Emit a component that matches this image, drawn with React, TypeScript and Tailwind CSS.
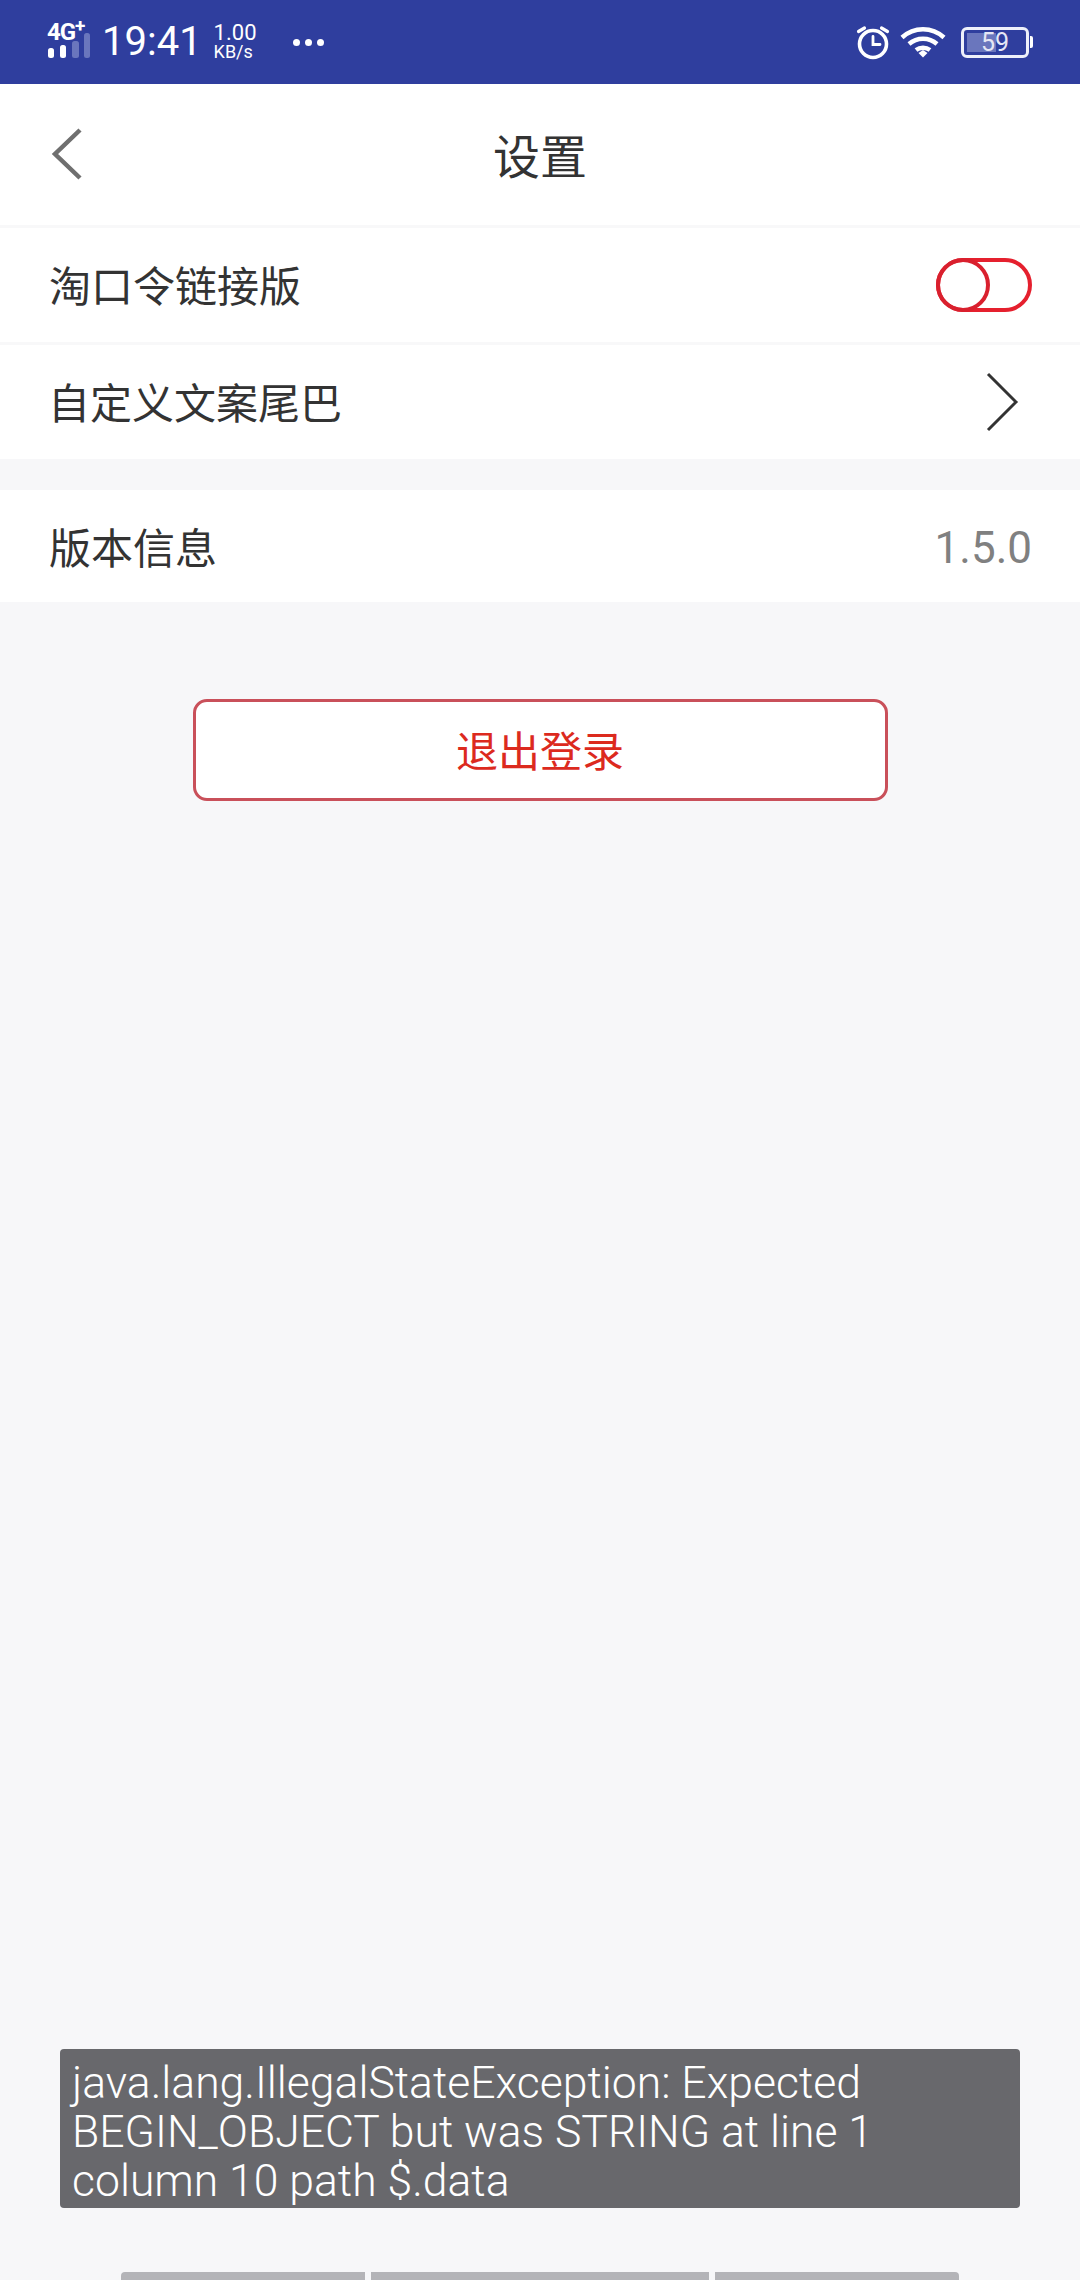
export default function App() {
  const cjk = { fontFamily: '"Noto Sans CJK SC", "Liberation Sans", sans-serif' };
  return (
    <div className="relative flex h-[2280px] w-[1080px] flex-col overflow-hidden bg-[#f7f7f9]" style={cjk}>
      <div className="flex h-[84px] shrink-0 items-center bg-[#2f3e9e] text-white font-['Roboto','Liberation_Sans',sans-serif]">
        <div className="relative ml-[47px] h-[40px] w-[44px]">
          <span className="absolute left-0 top-[-3px] text-[24px] font-bold leading-[26px] tracking-[-1px]">4G</span>
          <span className="absolute left-[28px] top-[-5px] text-[19px] font-bold leading-[18px]">+</span>
          <svg width="44" height="40" viewBox="0 0 44 40" className="absolute left-0 top-0">
            <rect x="1" y="26" width="6" height="10" rx="2.500" fill="#ffffff" />
            <rect x="13" y="23" width="6" height="13" rx="2.500" fill="#ffffff" />
            <rect x="25" y="19" width="7" height="17" rx="2.500" fill="#6a76bd" />
            <rect x="37" y="11" width="6" height="25" rx="2.500" fill="#6a76bd" />
          </svg>
        </div>
        <span className="ml-[11px] text-[40px] leading-none">19:41</span>
        <div className="ml-[12px] flex w-[46px] flex-col items-start text-[18px] leading-[18px]">
          <span className="text-[22px] leading-[20px]">1.00</span>
          <span>KB/s</span>
        </div>
        <div className="ml-[33px] flex gap-[5px]">
          <div className="h-[7px] w-[7px] rounded-full bg-white" />
          <div className="h-[7px] w-[7px] rounded-full bg-white" />
          <div className="h-[7px] w-[7px] rounded-full bg-white" />
        </div>
        <div className="ml-auto mr-[47px] flex items-center">
          <svg width="36" height="36" viewBox="0 0 36 36" fill="none" stroke="#fff" strokeLinecap="round">
            <circle cx="18" cy="20" r="13.5" strokeWidth="3.6" />
            <path d="M18 12.5v8h7" strokeWidth="2.8" />
            <path d="M3.5 7.5l6-3.5M32.5 7.5l-6-3.5" strokeWidth="3.2" />
          </svg>
          <svg width="46" height="34" viewBox="0 0 46 34" fill="none" stroke="#fff" strokeWidth="4.5" className="ml-[9px]">
            <path d="M2 12.5c12-11 30-11 42 0" />
            <path d="M9 19c8-7 20-7 28 0" />
            <path d="M16 25c4-3 10-3 14 0" />
            <path d="M18.5 28l4.5-3 4.500 3-4.500 4.500z" fill="#fff" stroke="none" />
          </svg>
          <div className="relative ml-[15px] flex h-[31px] w-[68px] items-center justify-center rounded-[6px] border-[3px] border-[#eef0fa]">
            <div className="absolute bottom-[3px] left-[3px] top-[3px] w-[29px] bg-[#6a76bd]" />
            <span className="relative text-[25px] leading-none text-[#e4e6f4]">59</span>
          </div>
          <div className="ml-[1px] h-[12px] w-[3px] rounded-r-[2px] bg-white" />
        </div>
      </div>

      <div className="relative flex h-[144px] shrink-0 items-center justify-center border-b-[3px] border-[#f8f8f9] bg-white pb-[3px]">
        <svg width="36" height="56" viewBox="0 0 36 56" fill="none" stroke="#6f6f6f" strokeWidth="4.500" className="absolute left-[50px] top-[42px]">
          <path d="M30 4L5 28l25 24" />
        </svg>
        <span className="text-[47px] leading-none text-[#333333]">设置</span>
      </div>

      <div className="flex h-[117px] shrink-0 items-center justify-between border-b-[3px] border-[#f8f8f9] bg-white pl-[49px] pr-[48px]">
        <span className="pb-[2px] text-[42px] leading-none text-[#333333]">淘口令链接版</span>
        <div className="relative h-[54px] w-[96px] rounded-full border-[4px] border-[#e5202e]">
          <div className="absolute left-[-4px] top-[-4px] h-[54px] w-[54px] rounded-full border-[4px] border-[#d9202e]" />
        </div>
      </div>

      <div className="flex h-[114px] shrink-0 items-center justify-between bg-white pl-[48px] pr-[61px]">
        <span className="pb-[2px] text-[42px] leading-none text-[#333333]">自定义文案尾巴</span>
        <svg width="34" height="60" viewBox="0 0 34 60" fill="none" stroke="#333333" strokeWidth="3">
          <path d="M3 2l28 28-28 28" />
        </svg>
      </div>

      <div className="mt-[31px] flex h-[112px] shrink-0 items-center justify-between bg-white pl-[49px] pr-[48px]">
        <span className="text-[42px] leading-none text-[#333333]">版本信息</span>
        <span className="pt-[3px] font-['Roboto','Liberation_Sans',sans-serif] text-[44px] leading-none text-[#808080]">1.5.0</span>
      </div>

      <button className="mx-auto mt-[97px] flex h-[102px] w-[695px] shrink-0 items-center justify-center rounded-[14px] border-[3px] border-[#c9505a] bg-white pb-[3px] text-[42px] leading-none text-[#dc2a1e]">
        退出登录
      </button>

      <div className="absolute left-[60px] top-[2049px] h-[159px] w-[960px] rounded-[4px] bg-[#68686c] px-[12px] pt-[10px] font-['Roboto','Liberation_Sans',sans-serif] text-[44.5px] font-light leading-[49px] text-white">
        java.lang.IllegalStateException: Expected
        <br />
        BEGIN_OBJECT but was STRING at line 1
        <br />
        column 10 path $.data
      </div>

      <div className="absolute left-[121px] top-[2272px] flex gap-[6px]">
        <div className="h-[8px] w-[244px] rounded-tl-[4px] bg-[#b4b4b8]" />
        <div className="h-[8px] w-[338px] bg-[#b4b4b8]" />
        <div className="h-[8px] w-[244px] rounded-tr-[4px] bg-[#b4b4b8]" />
      </div>
    </div>
  );
}
